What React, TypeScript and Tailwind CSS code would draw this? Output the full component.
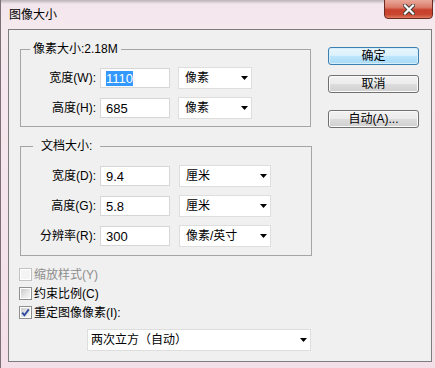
import React from 'react';

const font = { fontFamily: '"Liberation Sans", "Noto Sans CJK SC", sans-serif' };

function Arrow() {
  return (
    <svg width="7" height="4" viewBox="0 0 7 4">
      <polygon points="0,0 7,0 3.5,4" fill="#000" />
    </svg>
  );
}

function Select({ value, width, pl = 'pl-[6px]' }: { value: string; width: string; pl?: string }) {
  return (
    <div className={`${width} h-[22px] flex items-center justify-between border border-[#dedede] bg-white ${pl} pr-[3px]`}>
      <span className="text-[12px] leading-[16px] text-black">{value}</span>
      <Arrow />
    </div>
  );
}

function Field({ children }: { children: React.ReactNode }) {
  return (
    <div className="w-[70px] h-[20px] flex items-center border border-[#d6d6d6] bg-white pl-[5px]">
      <span className="text-[13px] leading-[15px] text-black">{children}</span>
    </div>
  );
}

function Row({ label, value, unit, selWidth, gap }: { label: string; value: React.ReactNode; unit: string; selWidth: string; gap: string }) {
  return (
    <div className="flex items-center h-[22px]">
      <span className="w-[75px] text-right text-[12px] leading-[16px] text-black">{label}</span>
      <div className="ml-[4px]">
        <Field>{value}</Field>
      </div>
      <div className={gap}>
        <Select value={unit} width={selWidth} />
      </div>
    </div>
  );
}

function CheckBox({ checked, disabled }: { checked?: boolean; disabled?: boolean }) {
  return (
    <div
      className={`w-[13px] h-[13px] border ${disabled ? 'border-[#c2c2c2]' : 'border-[#8e8f8f]'} p-px bg-white`}
    >
      <div
        className={`w-full h-full relative ${disabled ? 'bg-[#f4f4f4]' : 'bg-[linear-gradient(135deg,#cbcbcb_0%,#e8e8e8_60%,#f6f6f6_100%)]'}`}
      >
        {checked && (
          <svg className="absolute -left-px -top-px" width="11" height="11" viewBox="0 0 11 11">
            <path d="M2.2 5.6 L4.4 8.2 L8.8 2.4" stroke="#2b4aa0" strokeWidth="1.8" fill="none" />
          </svg>
        )}
      </div>
    </div>
  );
}

function CheckRow({ label, checked, disabled }: { label: string; checked?: boolean; disabled?: boolean }) {
  return (
    <div className="flex items-center h-[19px] -ml-px gap-[2px]">
      <CheckBox checked={checked} disabled={disabled} />
      <span className={`text-[12px] leading-[16px] ${disabled ? 'text-[#8d8d8d]' : 'text-black'}`}>{label}</span>
    </div>
  );
}

function Button({ children, primary }: { children: React.ReactNode; primary?: boolean }) {
  return (
    <div
      className={`w-[91px] h-[18px] rounded-[3px] border flex items-center justify-center text-[12px] leading-[16px] text-black ${
        primary
          ? 'border-[#3c7fb1] bg-[linear-gradient(to_bottom,#eaf6fd_0%,#d9f0fc_50%,#bee6fd_50%,#a7d9f5_100%)] shadow-[inset_0_0_0_1px_#d6eefb]'
          : 'border-[#707070] bg-[linear-gradient(to_bottom,#f2f2f2_0%,#ebebeb_50%,#dddddd_50%,#cfcfcf_100%)] shadow-[inset_0_0_0_1px_#fbfbfb]'
      }`}
    >
      {children}
    </div>
  );
}

function CloseButton() {
  return (
    <div className="w-[49px] h-[20px] -mt-px mr-[2px] rounded-b-[4px] border border-[#6b2a22] bg-[linear-gradient(to_bottom,#e9a99b_0%,#dc7d6a_40%,#c8412c_55%,#c9452f_80%,#dd7a5e_100%)] flex items-center justify-center">
      <svg width="12" height="11" viewBox="0 0 12 11">
        <path d="M2 1.5 L10 9.5 M10 1.5 L2 9.5" stroke="#3a3a3a" strokeWidth="4" strokeLinecap="square" />
        <path d="M2 1.5 L10 9.5 M10 1.5 L2 9.5" stroke="#ffffff" strokeWidth="2.2" strokeLinecap="square" />
      </svg>
    </div>
  );
}

export default function App() {
  return (
    <div
      className="w-[435px] h-[368px] overflow-hidden border-l border-[#7c6f74] bg-[linear-gradient(to_bottom,#b9b2b5_0px,#f3e6ec_4px,#f5e9ee_30px,#f4dfe8_100%)]"
      style={font}
    >
      {/* Title bar */}
      <div className="h-[29px] flex items-start justify-between">
        <span className="ml-[8px] mt-[7px] text-[12px] leading-[16px] text-black">图像大小</span>
        <CloseButton />
      </div>

      {/* Client area */}
      <div className="ml-[7px] w-[424px] h-[333px] border border-[#7d7d7d] bg-[#f0f0f0] flex">
        <div className="pl-[11px] pt-[11px] flex flex-col">
          <fieldset className="w-[291px] border border-[#a5a5a5] pt-[10px] pb-[7px] flex flex-col gap-[8px]">
            <legend className="ml-[9px] px-[3px] text-[12px] leading-[16px] text-black">像素大小:2.18M</legend>
            <Row
              label="宽度(W):"
              value={<span className="bg-[#3399ff] text-white">1110</span>}
              unit="像素"
              selWidth="w-[74px]"
              gap="ml-[8px]"
            />
            <Row label="高度(H):" value="685" unit="像素" selWidth="w-[74px]" gap="ml-[8px]" />
          </fieldset>

          <fieldset className="mt-[11px] w-[292px] border border-[#a5a5a5] pt-[11px] pb-[8px] flex flex-col gap-[8px]">
            <legend className="ml-[12px] px-[8px] text-[12px] leading-[16px] text-black">文档大小:</legend>
            <Row label="宽度(D):" value="9.4" unit="厘米" selWidth="w-[92px]" gap="ml-[9px]" />
            <Row label="高度(G):" value="5.8" unit="厘米" selWidth="w-[92px]" gap="ml-[9px]" />
            <Row label="分辨率(R):" value="300" unit="像素/英寸" selWidth="w-[92px]" gap="ml-[9px]" />
          </fieldset>

          <div className="mt-[9px] flex flex-col">
            <CheckRow label="缩放样式(Y)" disabled />
            <CheckRow label="约束比例(C)" />
            <CheckRow label="重定图像像素(I):" checked />
          </div>

          <div className="mt-[7px] ml-[67px]">
            <Select value="两次立方（自动）" width="w-[224px]" pl="pl-[3px]" />
          </div>
        </div>

        <div className="ml-[16px] pt-[17px] flex flex-col">
          <Button primary>确定</Button>
          <div className="mt-[10px]">
            <Button>取消</Button>
          </div>
          <div className="mt-[17px]">
            <Button>自动(A)...</Button>
          </div>
        </div>
      </div>
    </div>
  );
}
